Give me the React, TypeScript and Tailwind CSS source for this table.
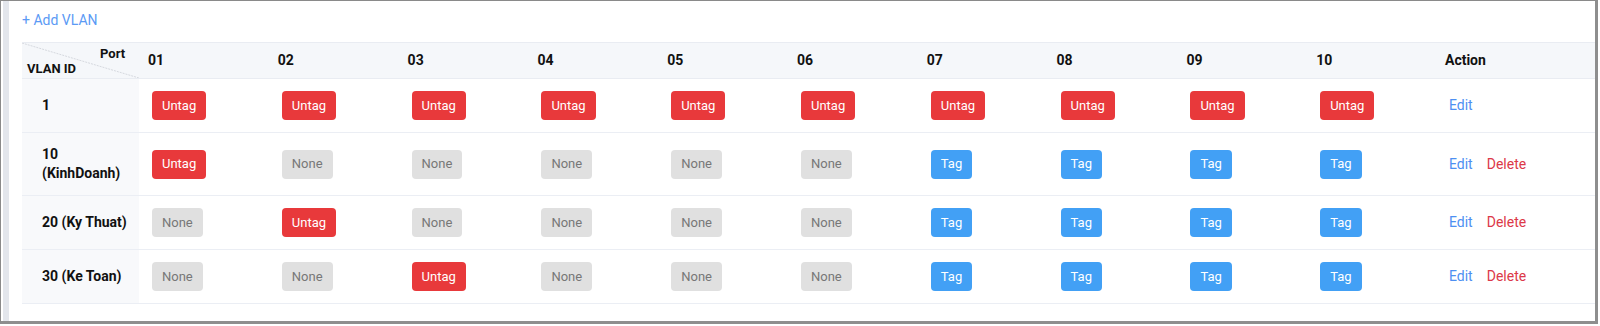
import React from "react";

type S = "U" | "N" | "T";

const rows: { label: string; ports: S[]; del: boolean }[] = [
  { label: "1", ports: ["U", "U", "U", "U", "U", "U", "U", "U", "U", "U"], del: false },
  { label: "10 (KinhDoanh)", ports: ["U", "N", "N", "N", "N", "N", "T", "T", "T", "T"], del: true },
  { label: "20 (Ky Thuat)", ports: ["N", "U", "N", "N", "N", "N", "T", "T", "T", "T"], del: true },
  { label: "30 (Ke Toan)", ports: ["N", "N", "U", "N", "N", "N", "T", "T", "T", "T"], del: true },
];

const ports = ["01", "02", "03", "04", "05", "06", "07", "08", "09", "10"];

function Badge({ s }: { s: S }) {
  if (s === "U")
    return (
      <span className="inline-flex h-[29px] items-center rounded-[4px] bg-[#e8393b] px-[10px] text-[13px] text-white">
        Untag
      </span>
    );
  if (s === "T")
    return (
      <span className="inline-flex h-[29px] items-center rounded-[4px] bg-[#42a0f5] px-[10px] text-[13px] text-white">
        Tag
      </span>
    );
  return (
    <span className="inline-flex h-[29px] items-center rounded-[4px] bg-[#e0e0e0] px-[10px] text-[13px] text-[#777777]">
      None
    </span>
  );
}

const grid = "grid grid-cols-[117px_repeat(10,129.8px)_1fr]";

export default function App() {
  return (
    <div className="h-[326px] w-[1600px] bg-white" style={{ fontFamily: "Roboto, 'Liberation Sans', sans-serif" }}>
      <div className="flex h-[324px] w-[1598px] border-t border-l border-r-[3px] border-b-[3px] border-t-[#8a8a8a] border-l-[#8a8a8a] border-r-[#8e8e8e] border-b-[#8e8e8e]">
        <div className="w-[2px]" />
        <div className="w-[6px] bg-[#e3e6ec]" />
        <div className="flex-1 pl-[13px]">
          <div className="pt-[9px] text-[14px] leading-[20px] text-[#5b9af5]">+ Add VLAN</div>
          <div className="mt-[12px]">
            <div className={`${grid} h-[37px] border-y border-[#e9ecf2] bg-[#f5f7fa] text-[14px] font-bold text-[#111]`}>
              <div className="relative">
                <svg className="absolute inset-0" width="117" height="35">
                  <line x1="0" y1="0" x2="117" y2="35" stroke="#d6d9df" strokeWidth="1" strokeDasharray="2 1" />
                </svg>
                <span className="absolute left-[78px] top-[1px] text-[13px] leading-[20px]">Port</span>
                <span className="absolute left-[5px] top-[16px] text-[13px] leading-[20px]">VLAN ID</span>
              </div>
              {ports.map((p) => (
                <div key={p} className="flex items-center pl-[9px]">
                  {p}
                </div>
              ))}
              <div className="flex items-center pl-[8px]">Action</div>
            </div>
            {rows.map((r) => (
              <div key={r.label} className={`${grid} border-b border-[#ebeef4]`}>
                <div className="flex items-center bg-[#f8f9fb] py-3 pl-[20px] pr-[10px] text-[14px] font-bold leading-[19px] text-[#111]">
                  {r.label}
                </div>
                {r.ports.map((s, i) => (
                  <div key={i} className="flex items-center py-3 pl-[13px]">
                    <Badge s={s} />
                  </div>
                ))}
                <div className="flex items-center gap-[14px] py-3 pl-[12px] text-[14px]">
                  <span className="text-[#4d8ff2]">Edit</span>
                  {r.del && <span className="text-[#dc3848]">Delete</span>}
                </div>
              </div>
            ))}
          </div>
        </div>
      </div>
    </div>
  );
}
